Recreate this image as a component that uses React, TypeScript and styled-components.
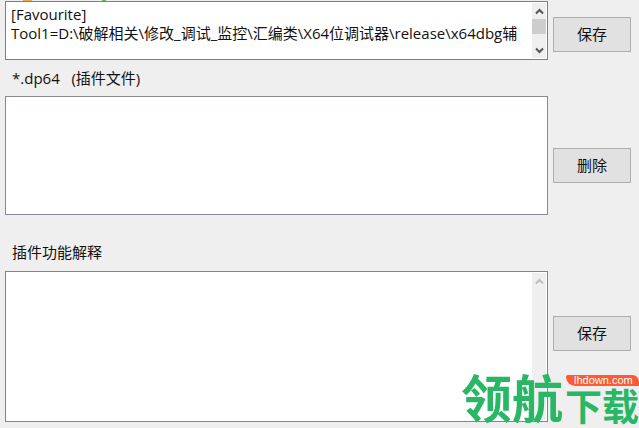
import React from "react";
import styled, { createGlobalStyle } from "styled-components";

const GlobalStyle = createGlobalStyle`
  * { box-sizing: border-box; }
  body {
    margin: 0;
    background: #efefef;
    color: #111;
    font-family: "Open Sans", "Noto Sans CJK SC", sans-serif;
    font-size: 15px;
    line-height: 19px;
  }
`;

const Window = styled.main`
  position: relative;
  display: flex;
  flex-direction: column;
  min-height: 100vh;
  padding: 1px 8px 6px 5px;
  overflow: hidden;
`;

const TopMarks = styled.svg`
  position: absolute;
  top: 0;
  left: 0;
`;

const Row = styled.section`
  display: flex;
  align-items: flex-start;
  gap: 5px;
`;

const Field = styled.div<{ $height: number; $border: string }>`
  display: flex;
  flex: 1;
  min-width: 0;
  height: ${(p) => p.$height}px;
  border: 1px solid ${(p) => p.$border};
  background: #fff;
`;

const TextBox = styled.textarea`
  flex: 1;
  min-width: 0;
  padding: 3px 5px;
  border: 0;
  outline: 0;
  resize: none;
  overflow: hidden;
  white-space: pre;
  background: transparent;
  color: inherit;
  font: inherit;
`;

const Label = styled.label<{ $top: number; $bottom: number }>`
  padding: ${(p) => p.$top}px 7px ${(p) => p.$bottom}px;
  line-height: 20px;
  white-space: pre;
`;

const ActionButton = styled.button<{ $top: number }>`
  flex: none;
  width: 78px;
  height: 35px;
  margin-top: ${(p) => p.$top}px;
  padding: 0;
  border: 1px solid #adadad;
  border-radius: 0;
  background: #e1e1e1;
  color: inherit;
  font: inherit;
`;

const ScrollBar = styled.div`
  display: flex;
  flex: none;
  flex-direction: column;
  width: 15px;
  padding: 1px 1px 1px 0;
  background: #fff;
`;

const Track = styled.div`
  flex: 1;
  background: #efefef;
`;

const Thumb = styled.div`
  height: 15px;
  background: #cdcdcd;
`;

const ScrollButton = styled.button`
  display: flex;
  align-items: center;
  justify-content: center;
  height: 16px;
  padding: 0;
  border: 0;
  background: #efefef;
`;

const Watermark = styled.div`
  position: absolute;
  right: 0;
  bottom: 0;
  display: flex;
  align-items: flex-end;
  color: #2ab765;
  font-family: "Noto Sans CJK SC", sans-serif;
  font-weight: 700;
  pointer-events: none;
`;

const BrandLarge = styled.span`
  font-size: 51px;
  line-height: 64px;
`;

const BrandSide = styled.span`
  display: flex;
  flex-direction: column;
  align-items: flex-end;
  width: 76px;
  padding-bottom: 4px;
`;

const BrandSmall = styled.span`
  font-size: 37px;
  line-height: 38px;
`;

const Domain = styled.span`
  width: 73px;
  height: 11px;
  padding-left: 8px;
  border-radius: 2px 7px 0 10px;
  background: #fc5b35;
  color: #fff;
  font: 400 11px/11px "Liberation Sans", sans-serif;
`;

function Chevron({ down = false, color }: { down?: boolean; color: string }) {
  return (
    <svg width="9" height="7" viewBox="0 0 9 7" fill="none" aria-hidden="true">
      <path d={down ? "M1 1.5 4.5 5 8 1.5" : "M1 5.5 4.5 2 8 5.5"} stroke={color} strokeWidth="2" />
    </svg>
  );
}

const config = "[Favourite]\nTool1=D:\\破解相关\\修改_调试_监控\\汇编类\\X64位调试器\\release\\x64dbg辅";

export default function App() {
  return (
    <>
      <GlobalStyle />
      <Window>
        <TopMarks width="110" height="1" aria-hidden="true">
          <path d="M23 0h9v1h-9z" fill="#f6a34e" />
          <path d="M102 0h4v1h-4z" fill="#58bd5b" />
        </TopMarks>
        <Row>
          <Field $height={59} $border="#3f8fd2">
            <TextBox aria-label="Favourite" defaultValue={config} spellCheck={false} />
            <ScrollBar>
              <ScrollButton aria-label="向上滚动"><Chevron color="#555" /></ScrollButton>
              <Track><Thumb /></Track>
              <ScrollButton aria-label="向下滚动"><Chevron down color="#555" /></ScrollButton>
            </ScrollBar>
          </Field>
          <ActionButton $top={16}>保存</ActionButton>
        </Row>
        <Label htmlFor="plugins" $top={8} $bottom={8}>{"*.dp64   (插件文件)"}</Label>
        <Row>
          <Field $height={119} $border="#858a96">
            <TextBox id="plugins" />
          </Field>
          <ActionButton $top={52}>删除</ActionButton>
        </Row>
        <Label htmlFor="description" $top={27} $bottom={9}>插件功能解释</Label>
        <Row>
          <Field $height={151} $border="#858585">
            <TextBox id="description" />
            <ScrollBar>
              <ScrollButton aria-label="向上滚动"><Chevron color="#bdbdbd" /></ScrollButton>
              <Track />
            </ScrollBar>
          </Field>
          <ActionButton $top={45}>保存</ActionButton>
        </Row>
        <Watermark>
          <BrandLarge>领航</BrandLarge>
          <BrandSide>
            <Domain>lhdown.com</Domain>
            <BrandSmall>下载</BrandSmall>
          </BrandSide>
        </Watermark>
      </Window>
    </>
  );
}
